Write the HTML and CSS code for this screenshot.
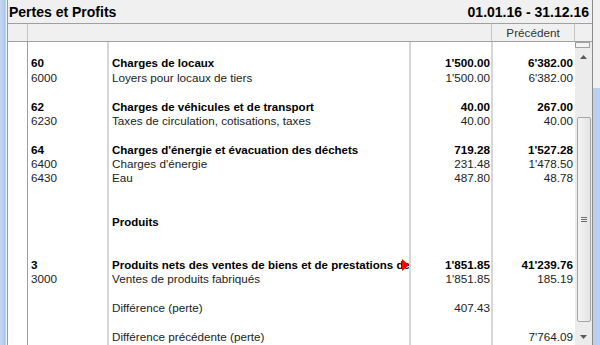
FILE: index.html
```html
<!DOCTYPE html>
<html lang="fr">
<head>
    <meta charset="UTF-8">
    <title>Pertes et Profits</title>
    <link rel="stylesheet" href="styles.css">
</head>
<body>
    <div class="window">
        <div class="side side-left"></div>
        <div class="panel">
            <div class="title-bar">
                <span class="title">Pertes et Profits</span>
                <span class="period">01.01.16 - 31.12.16</span>
            </div>
            <div class="header-row">
                <div class="hcell hc0"></div>
                <div class="hcell hc1"></div>
                <div class="hcell hc2">Précédent</div>
                <div class="hcell hc3"></div>
            </div>
            <div class="content">
                <div class="rows">
                    <div class="row"><div class="c0"></div><div class="c1"></div><div class="c2"></div><div class="c3"></div><div class="c4"></div></div>
                    <div class="row bold"><div class="c0"></div><div class="c1">60</div><div class="c2">Charges de locaux</div><div class="c3">1'500.00</div><div class="c4">6'382.00</div></div>
                    <div class="row"><div class="c0"></div><div class="c1">6000</div><div class="c2">Loyers pour locaux de tiers</div><div class="c3">1'500.00</div><div class="c4">6'382.00</div></div>
                    <div class="row"><div class="c0"></div><div class="c1"></div><div class="c2"></div><div class="c3"></div><div class="c4"></div></div>
                    <div class="row bold"><div class="c0"></div><div class="c1">62</div><div class="c2">Charges de véhicules et de transport</div><div class="c3">40.00</div><div class="c4">267.00</div></div>
                    <div class="row"><div class="c0"></div><div class="c1">6230</div><div class="c2">Taxes de circulation, cotisations, taxes</div><div class="c3">40.00</div><div class="c4">40.00</div></div>
                    <div class="row"><div class="c0"></div><div class="c1"></div><div class="c2"></div><div class="c3"></div><div class="c4"></div></div>
                    <div class="row bold"><div class="c0"></div><div class="c1">64</div><div class="c2">Charges d'énergie et évacuation des déchets</div><div class="c3">719.28</div><div class="c4">1'527.28</div></div>
                    <div class="row"><div class="c0"></div><div class="c1">6400</div><div class="c2">Charges d'énergie</div><div class="c3">231.48</div><div class="c4">1'478.50</div></div>
                    <div class="row"><div class="c0"></div><div class="c1">6430</div><div class="c2">Eau</div><div class="c3">487.80</div><div class="c4">48.78</div></div>
                    <div class="row"><div class="c0"></div><div class="c1"></div><div class="c2"></div><div class="c3"></div><div class="c4"></div></div>
                    <div class="row"><div class="c0"></div><div class="c1"></div><div class="c2"></div><div class="c3"></div><div class="c4"></div></div>
                    <div class="row bold"><div class="c0"></div><div class="c1"></div><div class="c2">Produits</div><div class="c3"></div><div class="c4"></div></div>
                    <div class="row"><div class="c0"></div><div class="c1"></div><div class="c2"></div><div class="c3"></div><div class="c4"></div></div>
                    <div class="row"><div class="c0"></div><div class="c1"></div><div class="c2"></div><div class="c3"></div><div class="c4"></div></div>
                    <div class="row bold"><div class="c0"></div><div class="c1">3</div><div class="c2 clipped">Produits nets des ventes de biens et de prestations de services<span class="more"></span></div><div class="c3">1'851.85</div><div class="c4">41'239.76</div></div>
                    <div class="row"><div class="c0"></div><div class="c1">3000</div><div class="c2">Ventes de produits fabriqués</div><div class="c3">1'851.85</div><div class="c4">185.19</div></div>
                    <div class="row"><div class="c0"></div><div class="c1"></div><div class="c2"></div><div class="c3"></div><div class="c4"></div></div>
                    <div class="row"><div class="c0"></div><div class="c1"></div><div class="c2">Différence (perte)</div><div class="c3">407.43</div><div class="c4"></div></div>
                    <div class="row"><div class="c0"></div><div class="c1"></div><div class="c2"></div><div class="c3"></div><div class="c4"></div></div>
                    <div class="row"><div class="c0"></div><div class="c1"></div><div class="c2">Différence précédente (perte)</div><div class="c3"></div><div class="c4">7'764.09</div></div>
                    <div class="row"><div class="c0"></div><div class="c1"></div><div class="c2"></div><div class="c3"></div><div class="c4"></div></div>
                </div>
                <div class="scrollbar">
                    <div class="stub"></div>
                    <div class="arrow arrow-up">
                        <svg width="7" height="4" viewBox="0 0 7 4"><path d="M0 4 L3.5 0 L7 4 Z" fill="#5a5a5a"/></svg>
                    </div>
                    <div class="thumb">
                        <div class="grip"><span></span><span></span><span></span></div>
                    </div>
                    <div class="arrow arrow-down">
                        <svg width="7" height="4" viewBox="0 0 7 4"><path d="M0 0 L7 0 L3.5 4 Z" fill="#5a5a5a"/></svg>
                    </div>
                </div>
            </div>
        </div>
        <div class="side side-right"></div>
    </div>
</body>
</html>
```
FILE: styles.css
```css
body {
    margin: 0;
    padding: 0;
    font-family: "Liberation Sans", Arial, sans-serif;
    font-size: 11.7px;
    color: #222;
    background-color: #f0f0f0;
    overflow: hidden;
}
.window {
    display: flex;
    width: 600px;
    height: 345px;
    overflow: hidden;
}
.side {
    width: 7px;
    flex-shrink: 0;
}
.side-left {
    background: linear-gradient(to right, #c3d8f2 0, #b4cdee 4px, #9fbde3 5px, #e9eef5 6px);
}
.side-right {
    background: linear-gradient(to bottom, #f0f0f0 0, #f0f0f0 88px, #b9d1f0 88px);
}
.panel {
    flex: 1;
    display: flex;
    flex-direction: column;
    border-left: 1px solid #9c9c9c;
    border-right: 1px solid #8c8c8c;
    background-color: #ffffff;
    min-width: 0;
}
.title-bar {
    height: 23px;
    border-bottom: 1px solid #a0a0a0;
    background-color: #f0f0f0;
    display: flex;
    justify-content: space-between;
    align-items: center;
    padding: 0 3px 0 1px;
    font-size: 14px;
    font-weight: bold;
    color: #000;
}
.header-row {
    display: flex;
    height: 17px;
    border-bottom: 1px solid #a0a0a0;
    background-color: #f0f0f0;
}
.hcell {
    height: 17px;
    line-height: 17px;
    color: #333;
    text-align: center;
}
.hc0 {
    width: 19px;
    border-right: 1px solid #c4c4c4;
}
.hc1 {
    width: 463px;
    border-right: 1px solid #c4c4c4;
}
.hc2 {
    width: 82px;
    border-right: 1px solid #c4c4c4;
}
.hc3 {
    width: 17px;
}
.content {
    flex: 1;
    display: flex;
    min-height: 0;
}
.rows {
    width: 567px;
}
.row {
    display: flex;
    height: 14.375px;
    line-height: 14.375px;
}
.row > div {
    white-space: nowrap;
    overflow: hidden;
}
.row.bold {
    font-weight: bold;
    color: #000;
}
.row.bold .c2 {
    font-size: 11.5px;
}
.c0 {
    width: 19px;
    border-right: 1px solid #a0a0a0;
}
.c1 {
    width: 76px;
    padding-left: 3px;
    border-right: 2px solid #d6d6d6;
}
.c2 {
    width: 297px;
    padding-left: 3px;
    border-right: 2px solid #d6d6d6;
    position: relative;
}
.c3 {
    width: 79px;
    padding-right: 1px;
    text-align: right;
    border-right: 2px solid #d6d6d6;
}
.c4 {
    width: 80px;
    padding-right: 2px;
    text-align: right;
}
.clipped {
    text-overflow: clip;
}
.more {
    position: absolute;
    right: 0;
    top: 1px;
    width: 0;
    height: 0;
    border-top: 6px solid transparent;
    border-bottom: 6px solid transparent;
    border-left: 7px solid #f00;
}
.scrollbar {
    width: 17px;
    background-color: #ececec;
    display: flex;
    flex-direction: column;
    align-items: center;
}
.stub {
    width: 13px;
    height: 4px;
    margin-left: -2px;
    border: 1px solid #a0a0a0;
    background-color: #f4f4f4;
}
.arrow {
    height: 17px;
    display: flex;
    align-items: center;
    justify-content: center;
}
.arrow-up {
    margin-top: 1px;
}
.thumb {
    width: 12px;
    height: 208px;
    margin-top: 52px;
    border: 1px solid #a6a6a6;
    border-radius: 2px;
    background: linear-gradient(to right, #f4f4f4, #e4e4e4);
    display: flex;
    align-items: center;
    justify-content: center;
}
.grip {
    display: flex;
    flex-direction: column;
    gap: 1px;
}
.grip span {
    display: block;
    width: 6px;
    height: 1px;
    background-color: #6e6e6e;
}
.arrow-down {
    margin-top: 6px;
}
```
